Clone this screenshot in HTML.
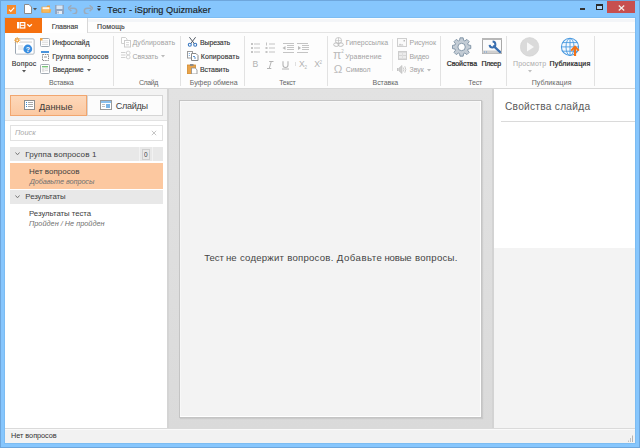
<!DOCTYPE html>
<html><head><meta charset="utf-8"><title>iSpring Quizmaker</title>
<style>
html,body{margin:0;padding:0;width:640px;height:448px;overflow:hidden;background:#89c7fd}
body{position:relative;font-family:"Liberation Sans", sans-serif}
.r{position:absolute;display:block}
.t{position:absolute;white-space:nowrap}
</style></head><body>
<div class="r" style="left:0px;top:0px;width:640px;height:448px;background:#86c6fd;box-shadow:inset 0 0 0 1px #6ea6dc"></div>
<div class="r" style="left:4px;top:17px;width:632px;height:427px;background:#7cbcf2"></div>
<div class="r" style="left:5px;top:18px;width:630px;height:425px;background:#ffffff"></div>
<svg class="r" style="left:7px;top:5px" width="9" height="9" viewBox="0 0 9 9"><rect x="0" y="0" width="9" height="9" fill="#f58a2c"/><path d="M2 4.6 L3.8 6.4 L7.2 2.6" stroke="#fff" stroke-width="1.1" fill="none"/></svg>
<svg class="r" style="left:24px;top:4px" width="8" height="10" viewBox="0 0 8 10"><path d="M0.5 0.5 H5 L7.5 3 V9.5 H0.5 Z" fill="#fff" stroke="#8a8a8a" stroke-width="1"/></svg>
<svg class="r" style="left:33px;top:8px" width="4" height="3" viewBox="0 0 4 3"><path d="M0 0 H4 L2 2.5 Z" fill="#555"/></svg>
<svg class="r" style="left:41px;top:5px" width="11" height="8" viewBox="0 0 11 8"><path d="M0.5 1.8 H5.5 L6.3 0.5 H9 V7.5 H0.5 Z" fill="#f2a23a"/><rect x="1.5" y="2.2" width="7" height="3" fill="#fff6ea"/><path d="M0.5 4.2 H10.2 L9.5 7.8 H0.5 Z" fill="#f5ae48"/><rect x="2" y="5.6" width="6" height="0.8" fill="#f8c878"/></svg>
<svg class="r" style="left:55px;top:5px" width="9" height="9" viewBox="0 0 9 9"><rect x="0" y="0" width="9" height="9" fill="#90a6c2"/><rect x="1.5" y="0.5" width="6" height="3.5" fill="#d8e6f4"/><rect x="2" y="6" width="5" height="3" fill="#e8eef6"/><rect x="2.5" y="6.5" width="1.2" height="2" fill="#90a6c2"/></svg>
<svg class="r" style="left:68px;top:5px" width="10" height="9" viewBox="0 0 10 9"><path d="M2 3.2 H5.8 A2.9 2.9 0 0 1 5.8 9 H4.5" stroke="#9cabbb" stroke-width="1.5" fill="none"/><path d="M0.2 3.2 L3.4 0.3 M0.2 3.2 L3.4 6.1" stroke="#9cabbb" stroke-width="1.5" fill="none"/></svg>
<svg class="r" style="left:83px;top:5px" width="10" height="9" viewBox="0 0 10 9"><path d="M8 3.2 H4.2 A2.9 2.9 0 0 0 4.2 9 H5.5" stroke="#9cabbb" stroke-width="1.5" fill="none"/><path d="M9.8 3.2 L6.6 0.3 M9.8 3.2 L6.6 6.1" stroke="#9cabbb" stroke-width="1.5" fill="none"/></svg>
<svg class="r" style="left:97px;top:6px" width="4" height="6" viewBox="0 0 4 6"><rect x="0.5" y="0" width="3" height="1" fill="#333"/><path d="M0 2.5 H4 L2 5 Z" fill="#333"/></svg>
<div class="t" style="left:107.30px;top:4.63px;font-size:9.2px;line-height:11.96px;color:#1a1e24;font-weight:normal;font-style:normal;letter-spacing:0.030px;-webkit-text-stroke:0.15px currentColor;">Тест - iSpring Quizmaker</div>
<div class="r" style="left:580px;top:8px;width:5px;height:2px;background:#333"></div>
<div class="r" style="left:596px;top:4px;width:7px;height:6px;border:1px solid #2a2a2a;border-top-width:2px;box-sizing:border-box;background:#a8d4fa"></div>
<div class="r" style="left:607px;top:1px;width:28px;height:12px;background:#c74f4f"></div>
<svg class="r" style="left:618px;top:5px" width="7" height="6" viewBox="0 0 7 6"><path d="M0.8 0.5 L6.2 5.5 M6.2 0.5 L0.8 5.5" stroke="#f4ece6" stroke-width="1.25"/></svg>
<div class="r" style="left:5px;top:18px;width:630px;height:15px;background:#fdfdfd;border-bottom:1px solid #e3e3e3;box-sizing:border-box"></div>
<div class="r" style="left:5px;top:19px;width:630px;height:3px;background:#f3f5f8"></div>
<div class="r" style="left:5px;top:18px;width:37px;height:15px;background:#f5700f"></div>
<svg class="r" style="left:17px;top:22px" width="16" height="7" viewBox="0 0 16 7"><rect x="0" y="0" width="2.2" height="6.5" fill="#fff"/><rect x="3.2" y="0.6" width="4.6" height="5.4" fill="none" stroke="#fff" stroke-width="1.2"/><rect x="3.2" y="2.8" width="4.6" height="1.1" fill="#fff"/><path d="M10.3 2.2 L12.6 4.4 L14.9 2.2" fill="none" stroke="#fff" stroke-width="1.3"/></svg>
<div class="r" style="left:42px;top:18px;width:46px;height:15px;background:#fff;border-right:1px solid #d8d8d8;box-sizing:border-box"></div>
<div class="t" style="left:51.68px;top:21.82px;font-size:7px;line-height:9.1px;color:#444;font-weight:normal;font-style:normal;letter-spacing:-0.043px;-webkit-text-stroke:0.15px currentColor;">Главная</div>
<div class="t" style="left:97.00px;top:21.82px;font-size:7px;line-height:9.1px;color:#444;font-weight:normal;font-style:normal;letter-spacing:0.140px;-webkit-text-stroke:0.15px currentColor;">Помощь</div>
<div class="r" style="left:5px;top:33px;width:630px;height:56px;background:#fdfdfd;border-bottom:1px solid #d8d8d8;box-sizing:border-box"></div>
<div class="r" style="left:113px;top:36px;width:1px;height:50px;background:#e2e2e2"></div>
<div class="r" style="left:180px;top:36px;width:1px;height:50px;background:#e2e2e2"></div>
<div class="r" style="left:244px;top:36px;width:1px;height:50px;background:#e2e2e2"></div>
<div class="r" style="left:327px;top:36px;width:1px;height:50px;background:#e2e2e2"></div>
<div class="r" style="left:440px;top:36px;width:1px;height:50px;background:#e2e2e2"></div>
<div class="r" style="left:506px;top:36px;width:1px;height:50px;background:#e2e2e2"></div>
<div class="r" style="left:594px;top:36px;width:1px;height:50px;background:#e2e2e2"></div>
<div class="r" style="left:392px;top:39px;width:1px;height:32px;background:#e6e6e6"></div>
<svg class="r" style="left:14px;top:37px" width="21" height="18" viewBox="0 0 21 18"><rect x="1.5" y="2" width="18.5" height="15" rx="0.8" fill="none" stroke="#9ba6b2" stroke-width="1"/><rect x="2" y="2.5" width="17.5" height="14" fill="#fff" opacity="0.9"/><rect x="6" y="4.6" width="12" height="0.9" fill="#c8c8c8"/><rect x="4" y="8" width="5" height="5" fill="#ececec"/><circle cx="13.8" cy="12" r="4.4" fill="#3a8ee0"/><text x="13.8" y="14.5" font-size="7" font-family="Liberation Sans" font-weight="bold" fill="#fff" text-anchor="middle">?</text><path d="M3.2 3.2 L6.30 3.20" stroke="#f0a848" stroke-width="1"/><path d="M3.2 3.2 L5.39 5.39" stroke="#f0a848" stroke-width="1"/><path d="M3.2 3.2 L3.20 6.30" stroke="#f0a848" stroke-width="1"/><path d="M3.2 3.2 L1.01 5.39" stroke="#f0a848" stroke-width="1"/><path d="M3.2 3.2 L0.10 3.20" stroke="#f0a848" stroke-width="1"/><path d="M3.2 3.2 L1.01 1.01" stroke="#f0a848" stroke-width="1"/><path d="M3.2 3.2 L3.20 0.10" stroke="#f0a848" stroke-width="1"/><path d="M3.2 3.2 L5.39 1.01" stroke="#f0a848" stroke-width="1"/><circle cx="3.2" cy="3.2" r="1.9" fill="#f0a848"/><circle cx="3.2" cy="3.2" r="0.8" fill="#fff"/></svg>
<div class="t" style="left:11.68px;top:59.02px;font-size:7px;line-height:9.1px;color:#333;font-weight:normal;font-style:normal;letter-spacing:0.204px;-webkit-text-stroke:0.12px currentColor;">Вопрос</div>
<svg class="r" style="left:22px;top:70px" width="4" height="3" viewBox="0 0 4 3"><path d="M0 0 H4 L2 2.5 Z" fill="#555"/></svg>
<svg class="r" style="left:40px;top:38px" width="10" height="9" viewBox="0 0 10 9"><rect x="0.5" y="0.5" width="9" height="8" rx="1" fill="#fff" stroke="#a4acb4"/><rect x="2" y="2.5" width="6" height="0.8" fill="#d8d8d8"/><rect x="2" y="4.3" width="6" height="0.8" fill="#d8d8d8"/><rect x="2" y="6.1" width="6" height="0.8" fill="#d8d8d8"/><rect x="0" y="0" width="2.5" height="2.5" fill="#f2a848"/></svg>
<div class="t" style="left:52.32px;top:38.22px;font-size:7px;line-height:9.1px;color:#333;font-weight:normal;font-style:normal;letter-spacing:-0.105px;-webkit-text-stroke:0.12px currentColor;">Инфослайд</div>
<svg class="r" style="left:40px;top:51px" width="10" height="10" viewBox="0 0 10 10"><rect x="1" y="0" width="8" height="2" fill="#4a94dc"/><rect x="2.5" y="3.5" width="6" height="6" fill="#fff" stroke="#8c8c8c" stroke-width="1" stroke-dasharray="1.5 0.8"/><rect x="4" y="5" width="3" height="2" fill="#c8c8c8"/></svg>
<div class="t" style="left:52.32px;top:51.52px;font-size:7px;line-height:9.1px;color:#333;font-weight:normal;font-style:normal;letter-spacing:0.119px;-webkit-text-stroke:0.12px currentColor;">Группа вопросов</div>
<svg class="r" style="left:40px;top:64px" width="10" height="10" viewBox="0 0 10 10"><rect x="0.5" y="0.5" width="9" height="9" rx="1" fill="#fff" stroke="#a4acb4"/><rect x="2" y="2.2" width="6" height="1.1" fill="#58b858"/><rect x="2" y="4.3" width="2.5" height="3.5" fill="#e0e0e0"/><rect x="5" y="4.5" width="3" height="0.8" fill="#d0d0d0"/><rect x="5" y="6.3" width="3" height="0.8" fill="#d0d0d0"/></svg>
<div class="t" style="left:52.70px;top:64.82px;font-size:7px;line-height:9.1px;color:#333;font-weight:normal;font-style:normal;letter-spacing:-0.100px;-webkit-text-stroke:0.12px currentColor;">Введение</div>
<svg class="r" style="left:87px;top:69px" width="4" height="3" viewBox="0 0 4 3"><path d="M0 0 H4 L2 2.5 Z" fill="#666"/></svg>
<div class="t" style="left:49.00px;top:78.32px;font-size:7px;line-height:9.1px;color:#666;font-weight:normal;font-style:normal;letter-spacing:-0.233px;">Вставка</div>
<svg class="r" style="left:121px;top:37px" width="10" height="11" viewBox="0 0 10 11"><path d="M0.5 0.5 H4.5 L6 2 V6.5 H0.5 Z" fill="#fff" stroke="#d0d0d0"/><rect x="3.5" y="3.5" width="6" height="6.5" fill="#fff" stroke="#cccccc"/><rect x="5" y="5" width="3" height="1" fill="#dcdcdc"/><rect x="5" y="7" width="3" height="1.5" fill="#dcdcdc"/></svg>
<div class="t" style="left:132.38px;top:38.22px;font-size:7px;line-height:9.1px;color:#a2a2a2;font-weight:normal;font-style:normal;letter-spacing:0.064px;">Дублировать</div>
<svg class="r" style="left:121px;top:50px" width="10" height="10" viewBox="0 0 10 10"><rect x="0" y="2" width="4.5" height="1" fill="#d0d0d0"/><rect x="0" y="4.5" width="4.5" height="1" fill="#d0d0d0"/><rect x="0" y="7" width="4.5" height="1" fill="#d0d0d0"/><circle cx="7.2" cy="3" r="1.9" fill="none" stroke="#cfcfcf" stroke-width="0.9"/><circle cx="7.2" cy="7" r="1.9" fill="none" stroke="#cfcfcf" stroke-width="0.9"/></svg>
<div class="t" style="left:132.50px;top:51.52px;font-size:7px;line-height:9.1px;color:#a2a2a2;font-weight:normal;font-style:normal;letter-spacing:-0.117px;">Связать</div>
<svg class="r" style="left:161px;top:55px" width="4" height="3" viewBox="0 0 4 3"><path d="M0 0 H4 L2 2.5 Z" fill="#bbb"/></svg>
<div class="t" style="left:139.00px;top:78.32px;font-size:7px;line-height:9.1px;color:#666;font-weight:normal;font-style:normal;letter-spacing:-0.445px;">Слайд</div>
<svg class="r" style="left:187px;top:36px" width="11" height="11" viewBox="0 0 11 11"><path d="M2.4 1.2 L7.6 8 M8.6 1.2 L3.4 8" stroke="#555c66" stroke-width="1"/><circle cx="2.8" cy="8.8" r="1.5" fill="#fff" stroke="#3a78c0" stroke-width="1.1"/><circle cx="8.2" cy="8.8" r="1.5" fill="#fff" stroke="#3a78c0" stroke-width="1.1"/></svg>
<div class="t" style="left:199.94px;top:38.22px;font-size:7px;line-height:9.1px;color:#333;font-weight:normal;font-style:normal;letter-spacing:-0.126px;-webkit-text-stroke:0.12px currentColor;">Вырезать</div>
<svg class="r" style="left:187px;top:51px" width="12" height="10" viewBox="0 0 12 10"><rect x="0.5" y="0.5" width="5" height="6.5" fill="#fff" stroke="#9a9a9a"/><rect x="1.8" y="2" width="1" height="1" fill="#6aa0d8"/><rect x="1.8" y="4" width="1" height="1" fill="#6aa0d8"/><path d="M4.5 2.5 H9 L11 4.5 V9.5 H4.5 Z" fill="#fff" stroke="#8a8a8a"/><rect x="6" y="5" width="2" height="1" fill="#5a94d0"/><rect x="7" y="6.5" width="2" height="1" fill="#5a94d0"/></svg>
<div class="t" style="left:200.84px;top:51.52px;font-size:7px;line-height:9.1px;color:#333;font-weight:normal;font-style:normal;letter-spacing:0.084px;-webkit-text-stroke:0.12px currentColor;">Копировать</div>
<svg class="r" style="left:187px;top:64px" width="11" height="10" viewBox="0 0 11 10"><rect x="0.5" y="1" width="8" height="9" fill="#eaa44a" stroke="#d08a30" stroke-width="0.8"/><rect x="3" y="0" width="3.5" height="2" fill="#8a8a8a"/><path d="M4.5 4 H8.2 L10 5.8 V10 H4.5 Z" fill="#fff" stroke="#8a8a8a" stroke-width="0.8"/></svg>
<div class="t" style="left:199.94px;top:64.82px;font-size:7px;line-height:9.1px;color:#333;font-weight:normal;font-style:normal;letter-spacing:-0.063px;-webkit-text-stroke:0.12px currentColor;">Вставить</div>
<div class="t" style="left:189.68px;top:78.32px;font-size:7px;line-height:9.1px;color:#666;font-weight:normal;font-style:normal;letter-spacing:0.029px;">Буфер обмена</div>
<svg class="r" style="left:251px;top:42px" width="10" height="11" viewBox="0 0 10 11"><rect x="0" y="1" width="2" height="2" fill="#c4c4c4"/><rect x="0" y="5" width="2" height="2" fill="#c4c4c4"/><rect x="0" y="9" width="2" height="2" fill="#c4c4c4"/><rect x="3" y="1.5" width="6" height="1" fill="#c4c4c4"/><rect x="3" y="5.5" width="6" height="1" fill="#c4c4c4"/><rect x="3" y="9.5" width="6" height="1" fill="#c4c4c4"/></svg>
<svg class="r" style="left:265px;top:42px" width="10" height="11" viewBox="0 0 10 11"><rect x="1" y="0.5" width="1" height="3" fill="#c4c4c4"/><rect x="0.5" y="5" width="2" height="2" fill="#c4c4c4"/><rect x="0.5" y="9" width="2" height="2" fill="#c4c4c4"/><rect x="4" y="1.5" width="6" height="1" fill="#c4c4c4"/><rect x="4" y="5.5" width="6" height="1" fill="#c4c4c4"/><rect x="4" y="9.5" width="6" height="1" fill="#c4c4c4"/></svg>
<svg class="r" style="left:282px;top:42px" width="12" height="11" viewBox="0 0 12 11"><rect x="1" y="1" width="11" height="1" fill="#c4c4c4"/><rect x="5" y="3" width="7" height="1" fill="#c4c4c4"/><rect x="5" y="5" width="7" height="1" fill="#c4c4c4"/><rect x="5" y="7" width="7" height="1" fill="#c4c4c4"/><rect x="1" y="10" width="11" height="1" fill="#c4c4c4"/><path d="M0.5 6 L3.5 4 V8 Z" fill="#b8b8b8"/></svg>
<svg class="r" style="left:297px;top:42px" width="12" height="11" viewBox="0 0 12 11"><rect x="0" y="1" width="11" height="1" fill="#c4c4c4"/><rect x="5" y="3" width="7" height="1" fill="#c4c4c4"/><rect x="5" y="5" width="7" height="1" fill="#c4c4c4"/><rect x="5" y="7" width="7" height="1" fill="#c4c4c4"/><rect x="0" y="10" width="11" height="1" fill="#c4c4c4"/><path d="M4 6 L1 4 V8 Z" fill="#b8b8b8"/></svg>
<div class="t" style="left:252.60px;top:59.33px;font-size:8.6px;line-height:11.18px;color:#b2b2b2;font-weight:normal;font-style:normal;">B</div>
<svg class="r" style="left:266px;top:61px" width="8" height="8" viewBox="0 0 8 8"><path d="M3.2 0.5 H7.5 M1 7.5 H5.3 M5.3 0.5 L3.2 7.5" stroke="#b4b4b4" stroke-width="1" fill="none"/></svg>
<svg class="r" style="left:282px;top:61px" width="7" height="9" viewBox="0 0 7 9"><path d="M1 0.3 V4 A2.5 2.5 0 0 0 6 4 V0.3" stroke="#b4b4b4" stroke-width="1.1" fill="none"/><path d="M0 8 H7" stroke="#b4b4b4" stroke-width="1"/></svg>
<div class="t" style="left:299.00px;top:59.33px;font-size:8.6px;line-height:11.18px;color:#b2b2b2;font-weight:normal;font-style:normal;">X</div>
<div class="t" style="left:304.60px;top:64.82px;font-size:4.5px;line-height:5.85px;color:#b2b2b2;font-weight:normal;font-style:normal;">2</div>
<div class="t" style="left:314.20px;top:59.33px;font-size:8.6px;line-height:11.18px;color:#b2b2b2;font-weight:normal;font-style:normal;">X</div>
<div class="t" style="left:319.60px;top:59.72px;font-size:4.5px;line-height:5.85px;color:#b2b2b2;font-weight:normal;font-style:normal;">2</div>
<div class="r" style="left:295px;top:62px;width:1px;height:4px;background:#e0e0e0"></div>
<div class="t" style="left:279.18px;top:78.32px;font-size:7px;line-height:9.1px;color:#666;font-weight:normal;font-style:normal;letter-spacing:-0.255px;">Текст</div>
<svg class="r" style="left:333px;top:37px" width="11" height="10" viewBox="0 0 11 10"><circle cx="5.5" cy="3.6" r="3.1" fill="#fff" stroke="#c4c4c4" stroke-width="0.9"/><path d="M2.4 3.6 H8.6 M5.5 0.5 V6.7" stroke="#c4c4c4" stroke-width="0.8"/><ellipse cx="3.3" cy="7.6" rx="2.6" ry="1.8" fill="none" stroke="#bcbcbc" stroke-width="1"/><ellipse cx="7.7" cy="7.6" rx="2.6" ry="1.8" fill="none" stroke="#bcbcbc" stroke-width="1"/></svg>
<div class="t" style="left:345.74px;top:38.22px;font-size:7px;line-height:9.1px;color:#a2a2a2;font-weight:normal;font-style:normal;letter-spacing:0.026px;">Гиперссылка</div>
<div class="t" style="left:333.00px;top:48.04px;font-size:12px;line-height:15.6px;color:#bbbbbb;font-weight:normal;font-style:normal;font-family:"Liberation Serif";">π</div>
<div class="t" style="left:341.30px;top:48.72px;font-size:4.5px;line-height:5.85px;color:#b0b0b0;font-weight:normal;font-style:normal;">2</div>
<div class="t" style="left:345.24px;top:51.52px;font-size:7px;line-height:9.1px;color:#a2a2a2;font-weight:normal;font-style:normal;letter-spacing:0.167px;">Уравнение</div>
<div class="t" style="left:333.80px;top:61.54px;font-size:11.5px;line-height:14.95px;color:#bbbbbb;font-weight:normal;font-style:normal;font-family:"Liberation Serif";">Ω</div>
<div class="t" style="left:345.74px;top:64.82px;font-size:7px;line-height:9.1px;color:#a2a2a2;font-weight:normal;font-style:normal;letter-spacing:-0.088px;">Символ</div>
<svg class="r" style="left:397px;top:38px" width="10" height="9" viewBox="0 0 10 9"><rect x="0.5" y="0.5" width="9" height="8" fill="#fafafa" stroke="#cfcfcf"/><path d="M1.5 7.5 L3 5.5 L4.2 6.8 L5.2 6 L6.5 7.5 Z" fill="#c4c4c4"/><rect x="6.5" y="2" width="1.5" height="1.5" fill="#bdbdbd"/></svg>
<div class="t" style="left:409.50px;top:38.22px;font-size:7px;line-height:9.1px;color:#a2a2a2;font-weight:normal;font-style:normal;letter-spacing:0.010px;">Рисунок</div>
<svg class="r" style="left:398px;top:51px" width="9" height="9" viewBox="0 0 9 9"><rect x="0" y="0" width="9" height="9" fill="#cdcdcd"/><rect x="1" y="1.5" width="7" height="6" fill="#ececec"/><rect x="1" y="4" width="7" height="1" fill="#d6d6d6"/><rect x="4" y="1.5" width="1" height="6" fill="#dedede"/></svg>
<div class="t" style="left:409.50px;top:51.52px;font-size:7px;line-height:9.1px;color:#a2a2a2;font-weight:normal;font-style:normal;letter-spacing:-0.175px;">Видео</div>
<svg class="r" style="left:397px;top:65px" width="10" height="9" viewBox="0 0 10 9"><rect x="0" y="3" width="1.5" height="3" fill="#c4c4c4"/><path d="M2 3 L5 0.5 V8.5 L2 6 Z" fill="#d0d0d0" stroke="#c0c0c0" stroke-width="0.6"/><path d="M6.3 2.5 Q7.6 4.5 6.3 6.5 M7.8 1.2 Q9.8 4.5 7.8 7.8" stroke="#c4c4c4" stroke-width="0.9" fill="none"/></svg>
<div class="t" style="left:409.50px;top:64.82px;font-size:7px;line-height:9.1px;color:#a2a2a2;font-weight:normal;font-style:normal;">Звук</div>
<svg class="r" style="left:427px;top:69px" width="4" height="3" viewBox="0 0 4 3"><path d="M0 0 H4 L2 2.5 Z" fill="#bbb"/></svg>
<div class="t" style="left:372.50px;top:78.32px;font-size:7px;line-height:9.1px;color:#666;font-weight:normal;font-style:normal;letter-spacing:-0.043px;">Вставка</div>
<svg class="r" style="left:452px;top:37px" width="20" height="20" viewBox="0 0 20 20"><polygon points="7.56,3.41 8.03,0.83 11.17,0.83 11.64,3.41 12.82,3.90 14.97,2.41 17.19,4.63 15.70,6.78 16.19,7.96 18.77,8.43 18.77,11.57 16.19,12.04 15.70,13.22 17.19,15.37 14.97,17.59 12.82,16.10 11.64,16.59 11.17,19.17 8.03,19.17 7.56,16.59 6.38,16.10 4.23,17.59 2.01,15.37 3.50,13.22 3.01,12.04 0.43,11.57 0.43,8.43 3.01,7.96 3.50,6.78 2.01,4.63 4.23,2.41 6.38,3.90" fill="#c3ccd5" stroke="#7b8ea2" stroke-width="0.9" stroke-linejoin="round"/><circle cx="9.6" cy="10" r="3.7" fill="#ffffff" stroke="#7b8ea2" stroke-width="0.9"/></svg>
<div class="t" style="left:446.68px;top:59.02px;font-size:7px;line-height:9.1px;color:#2a2a2a;font-weight:normal;font-style:normal;letter-spacing:-0.054px;-webkit-text-stroke:0.22px currentColor;">Свойства</div>
<svg class="r" style="left:482px;top:38px" width="20" height="16" viewBox="0 0 20 16"><rect x="0.5" y="0.5" width="19" height="15" fill="#fbfbfb" stroke="#a8a8a8"/><rect x="0" y="0" width="20" height="2" fill="#b8b8b8"/><rect x="0.5" y="12.5" width="19" height="3" fill="#cfcfcf"/><rect x="2" y="13.5" width="1" height="1" fill="#6a9ad0"/><rect x="4" y="13.5" width="1" height="1" fill="#6a9ad0"/><path d="M12 8.3 L18 14" stroke="#3a6fb0" stroke-width="2.3" stroke-linecap="round"/><path d="M10.6 3.6 A2.9 2.9 0 1 1 7.6 6.8" stroke="#3a6fb0" stroke-width="2" fill="none"/></svg>
<div class="t" style="left:481.50px;top:59.02px;font-size:7px;line-height:9.1px;color:#2a2a2a;font-weight:normal;font-style:normal;letter-spacing:-0.300px;-webkit-text-stroke:0.22px currentColor;">Плеер</div>
<div class="t" style="left:468.30px;top:78.32px;font-size:7px;line-height:9.1px;color:#666;font-weight:normal;font-style:normal;letter-spacing:-0.167px;">Тест</div>
<svg class="r" style="left:520px;top:37px" width="20" height="20" viewBox="0 0 20 20"><circle cx="9.6" cy="9.9" r="9.3" fill="#dadada" stroke="#d2d2d2" stroke-width="0.6"/><path d="M7 5.2 L14 9.9 L7 14.6 Z" fill="#f8f8f8"/></svg>
<div class="t" style="left:513.00px;top:58.72px;font-size:7px;line-height:9.1px;color:#ababab;font-weight:normal;font-style:normal;letter-spacing:0.154px;">Просмотр</div>
<svg class="r" style="left:528px;top:70px" width="4" height="3" viewBox="0 0 4 3"><path d="M0 0 H4 L2 2.5 Z" fill="#c0c0c0"/></svg>
<svg class="r" style="left:560px;top:37px" width="21" height="20" viewBox="0 0 21 20"><circle cx="10" cy="9.9" r="8.6" fill="#f4f9fe" stroke="#4a9ae0" stroke-width="1.1"/><ellipse cx="10" cy="9.9" rx="4" ry="8.6" fill="none" stroke="#4a9ae0" stroke-width="0.9"/><path d="M10 1.3 V18.5 M1.4 9.9 H18.6 M2.6 5.6 H17.4 M2.6 14.2 H17.4" stroke="#4a9ae0" stroke-width="0.9"/><path d="M15 10.5 V19" stroke="#f47216" stroke-width="2.2"/><path d="M11.2 13.6 L15 9.6 L18.8 13.6" fill="none" stroke="#f47216" stroke-width="2"/></svg>
<div class="t" style="left:549.56px;top:58.72px;font-size:7px;line-height:9.1px;color:#2a2a2a;font-weight:normal;font-style:normal;letter-spacing:0.169px;-webkit-text-stroke:0.22px currentColor;">Публикация</div>
<div class="t" style="left:531.64px;top:78.32px;font-size:7px;line-height:9.1px;color:#666;font-weight:normal;font-style:normal;letter-spacing:0.084px;">Публикация</div>
<div class="r" style="left:5px;top:89px;width:162px;height:339px;background:#ffffff"></div>
<div class="r" style="left:5px;top:89px;width:162px;height:32px;background:#f3f3f3;border-bottom:1px solid #e2e2e2;box-sizing:border-box"></div>
<div class="r" style="left:10px;top:95px;width:77px;height:21px;background:linear-gradient(#fdd8ba,#fbc9a2);border:1px solid #f1a66f;box-sizing:border-box"></div>
<svg class="r" style="left:24px;top:100px" width="11" height="10" viewBox="0 0 11 10"><rect x="0.5" y="0.5" width="10" height="9" fill="#fff" stroke="#8c8c8c"/><rect x="2" y="2" width="1" height="1" fill="#3a8ad6"/><rect x="2" y="4" width="1" height="1" fill="#3a8ad6"/><rect x="2" y="6" width="1" height="1" fill="#3a8ad6"/><rect x="4" y="2" width="5" height="1" fill="#a8a8a8"/><rect x="4" y="4" width="5" height="1" fill="#a8a8a8"/><rect x="4" y="6" width="5" height="1" fill="#a8a8a8"/></svg>
<div class="t" style="left:39.00px;top:100.73px;font-size:9.3px;line-height:12.09px;color:#3c3c3c;font-weight:normal;font-style:normal;">Данные</div>
<div class="r" style="left:87px;top:95px;width:76px;height:21px;background:#fcfcfc;border:1px solid #d6d6d6;box-sizing:border-box"></div>
<svg class="r" style="left:100px;top:100px" width="12" height="10" viewBox="0 0 12 10"><rect x="0.5" y="0.5" width="11" height="9" fill="#fff" stroke="#9a9a9a"/><rect x="1" y="1" width="10" height="2" fill="#8cc0ec"/><rect x="2" y="4" width="3" height="1" fill="#c0c0c0"/><rect x="2" y="6" width="3" height="1" fill="#c0c0c0"/><rect x="6" y="4" width="4" height="4" fill="#7ab4e6"/></svg>
<div class="t" style="left:115.64px;top:100.93px;font-size:9.1px;line-height:11.83px;color:#3c3c3c;font-weight:normal;font-style:normal;letter-spacing:-0.268px;">Слайды</div>
<div class="r" style="left:10px;top:125px;width:153px;height:16px;background:#fff;border:1px solid #e2e2e2;box-sizing:border-box"></div>
<div class="t" style="left:15.00px;top:128.23px;font-size:7.3px;line-height:9.49px;color:#a8a8a8;font-weight:normal;font-style:italic;letter-spacing:0.030px;">Поиск</div>
<svg class="r" style="left:151px;top:130px" width="6" height="6" viewBox="0 0 6 6"><path d="M0.8 0.8 L5.2 5.2 M5.2 0.8 L0.8 5.2" stroke="#b8b8b8" stroke-width="0.8"/></svg>
<div class="r" style="left:10px;top:147px;width:153px;height:14px;background:#e8e8e8"></div>
<svg class="r" style="left:15px;top:152px" width="5" height="4" viewBox="0 0 5 4"><path d="M0.5 0.5 L2.5 2.8 L4.5 0.5" stroke="#777" fill="none" stroke-width="1"/></svg>
<div class="t" style="left:25.36px;top:149.73px;font-size:8.1px;line-height:10.53px;color:#404040;font-weight:normal;font-style:normal;letter-spacing:0.084px;">Группа вопросов 1</div>
<div class="r" style="left:139px;top:147px;width:1px;height:14px;background:#f2f2f2"></div>
<div class="r" style="left:152px;top:147px;width:1px;height:14px;background:#f2f2f2"></div>
<div class="r" style="left:142px;top:149px;width:8px;height:11px;background:#e9e9e9;border:1px solid #cfcfcf;box-sizing:border-box"></div>
<div class="t" style="left:143.80px;top:150.03px;font-size:7.6px;line-height:9.88px;color:#3a3a3a;font-weight:normal;font-style:normal;transform:scaleX(0.85);transform-origin:left;">0</div>
<div class="r" style="left:10px;top:163px;width:153px;height:26px;background:#fcc8a0"></div>
<div class="t" style="left:29.00px;top:167.03px;font-size:8px;line-height:10.4px;color:#404040;font-weight:normal;font-style:normal;">Нет вопросов</div>
<div class="t" style="left:29.70px;top:176.73px;font-size:7.3px;line-height:9.49px;color:#707070;font-weight:normal;font-style:italic;letter-spacing:-0.097px;">Добавьте вопросы</div>
<div class="r" style="left:10px;top:190px;width:153px;height:14px;background:#e8e8e8"></div>
<svg class="r" style="left:15px;top:195px" width="5" height="4" viewBox="0 0 5 4"><path d="M0.5 0.5 L2.5 2.8 L4.5 0.5" stroke="#777" fill="none" stroke-width="1"/></svg>
<div class="t" style="left:25.36px;top:191.83px;font-size:7.8px;line-height:10.14px;color:#404040;font-weight:normal;font-style:normal;letter-spacing:-0.084px;">Результаты</div>
<div class="t" style="left:29.00px;top:208.73px;font-size:7.8px;line-height:10.14px;color:#404040;font-weight:normal;font-style:normal;letter-spacing:-0.043px;">Результаты теста</div>
<div class="t" style="left:29.00px;top:219.23px;font-size:7.3px;line-height:9.49px;color:#707070;font-weight:normal;font-style:italic;letter-spacing:0.014px;">Пройден / Не пройден</div>
<div class="r" style="left:167px;top:89px;width:2px;height:339px;background:#d4d4d4"></div>
<div class="r" style="left:169px;top:89px;width:325px;height:339px;background:linear-gradient(#e2e2e2,#dadada)"></div>
<div class="r" style="left:179px;top:100px;width:303px;height:318px;background:#f3f3f3;border:1px solid #c4c4c4;box-sizing:border-box;box-shadow:inset -1px -1px 0 #ffffff, inset 1px 1px 0 #f8f8f8, 1px 1px 1px rgba(0,0,0,0.07)"></div>
<div class="t" style="left:204.15px;top:251.63px;font-size:9.6px;line-height:12.48px;color:#454545;font-weight:normal;font-style:normal;letter-spacing:-0.050px;">Тест</div>
<div class="t" style="left:226.00px;top:251.63px;font-size:9.6px;line-height:12.48px;color:#454545;font-weight:normal;font-style:normal;letter-spacing:-0.100px;">не</div>
<div class="t" style="left:240.00px;top:251.63px;font-size:9.6px;line-height:12.48px;color:#454545;font-weight:normal;font-style:normal;letter-spacing:0.200px;">содержит</div>
<div class="t" style="left:287.15px;top:251.63px;font-size:9.6px;line-height:12.48px;color:#454545;font-weight:normal;font-style:normal;letter-spacing:0.256px;">вопросов.</div>
<div class="t" style="left:336.85px;top:251.63px;font-size:9.6px;line-height:12.48px;color:#454545;font-weight:normal;font-style:normal;letter-spacing:0.507px;">Добавьте</div>
<div class="t" style="left:384.50px;top:251.63px;font-size:9.6px;line-height:12.48px;color:#454545;font-weight:normal;font-style:normal;letter-spacing:-0.188px;">новые</div>
<div class="t" style="left:415.00px;top:251.63px;font-size:9.6px;line-height:12.48px;color:#454545;font-weight:normal;font-style:normal;letter-spacing:0.264px;">вопросы.</div>
<div class="r" style="left:492px;top:89px;width:2px;height:339px;background:#d3d3d3"></div>
<div class="r" style="left:494px;top:89px;width:141px;height:159px;background:#ffffff"></div>
<div class="r" style="left:494px;top:248px;width:141px;height:180px;background:#f3f3f3"></div>
<div class="t" style="left:505.00px;top:100.04px;font-size:10.2px;line-height:13.26px;color:#5a5a5a;font-weight:normal;font-style:normal;letter-spacing:0.250px;">Свойства слайда</div>
<div class="r" style="left:501px;top:121px;width:134px;height:1px;background:#dadada"></div>
<div class="r" style="left:5px;top:428px;width:630px;height:15px;background:#f2f2f2;border-top:1px solid #dadada;box-sizing:border-box;box-shadow:inset 0 1px 0 #fafafa"></div>
<svg class="r" style="left:627px;top:435px" width="7" height="8" viewBox="0 0 7 8"><rect x="5" y="0.5" width="1" height="6.5" fill="#b4b4b4"/><rect x="3" y="3" width="1" height="4" fill="#c0c0c0"/><rect x="1" y="5.5" width="1" height="1.5" fill="#c0c0c0"/></svg>
<div class="t" style="left:11.00px;top:431.43px;font-size:7.3px;line-height:9.49px;color:#333;font-weight:normal;font-style:normal;letter-spacing:-0.029px;">Нет вопросов</div>
</body></html>
